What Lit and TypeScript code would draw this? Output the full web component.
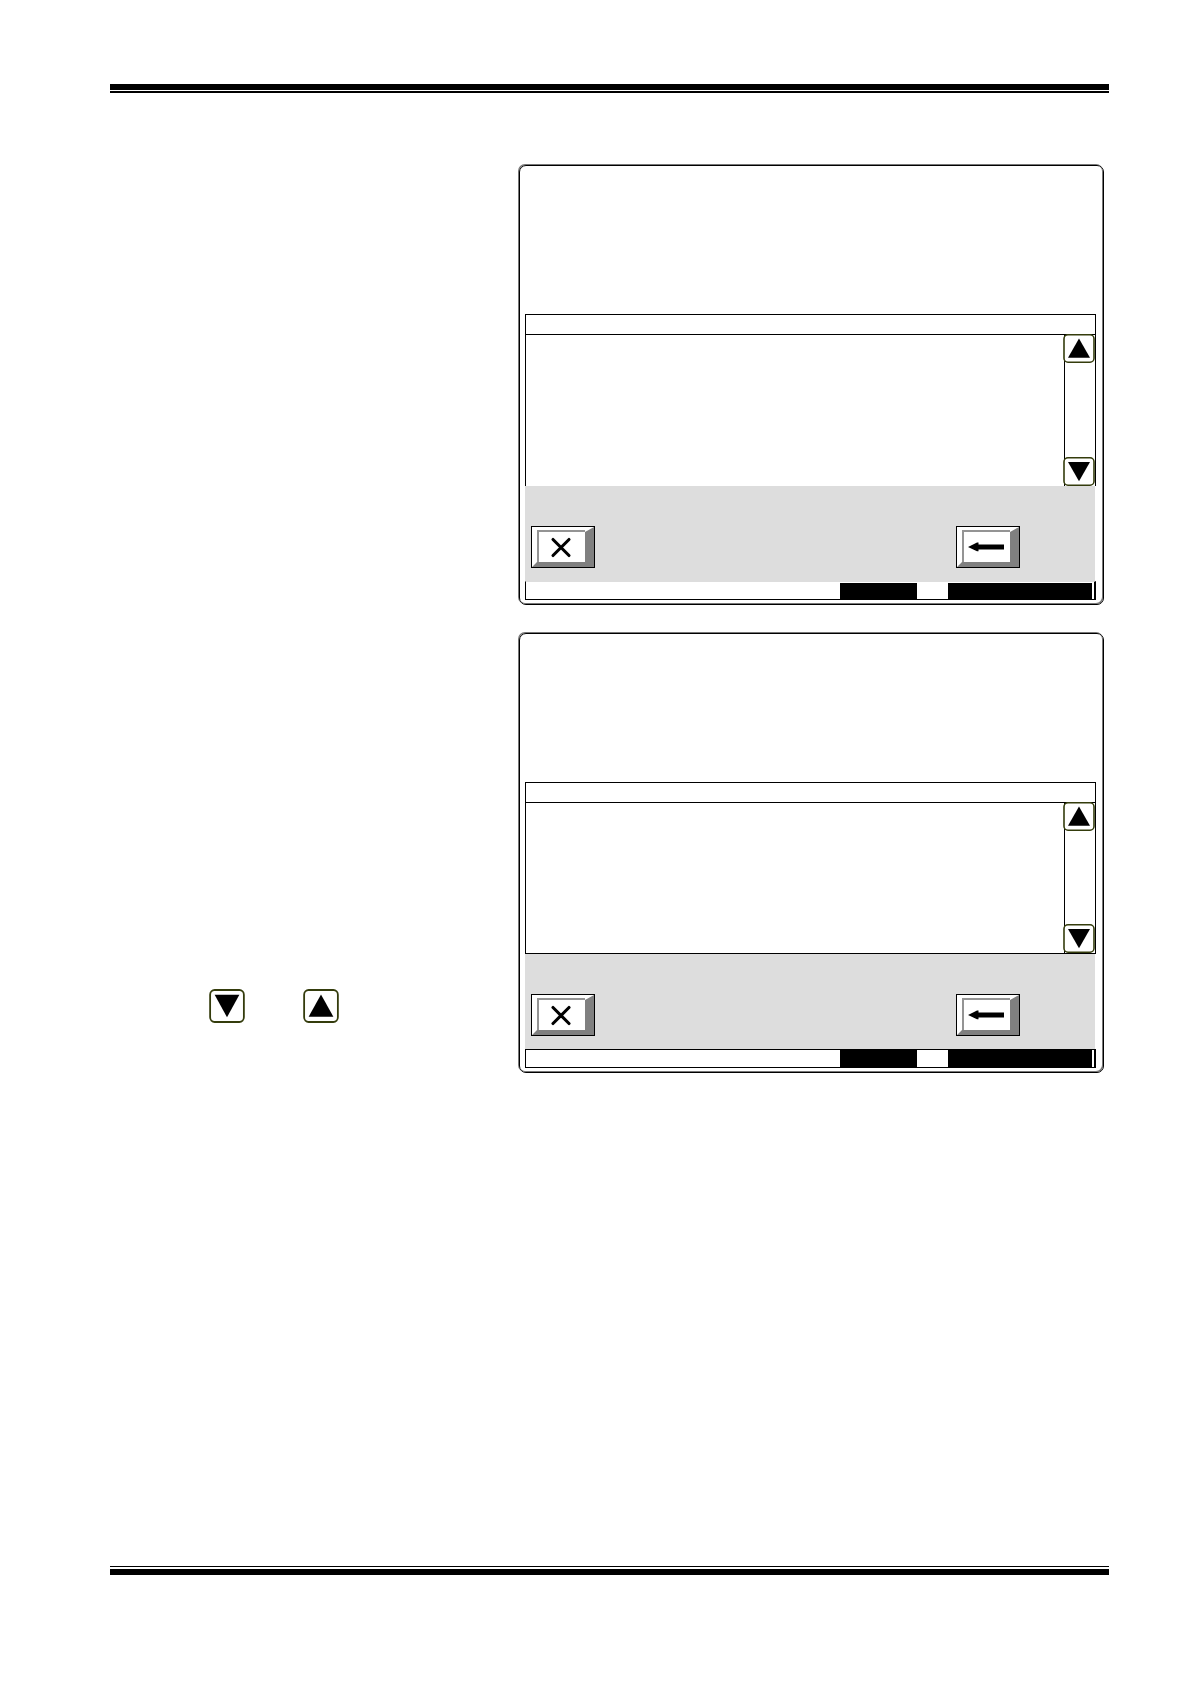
import { LitElement, html, css, svg } from "lit";
import { customElement, property } from "lit/decorators.js";

@customElement("arrow-button")
export class ArrowButton extends LitElement {
  @property() direction: "up" | "down" = "up";

  static styles = css`
    :host {
      display: block;
      width: 32px;
      height: 29px;
    }
    button {
      display: block;
      width: 100%;
      height: 100%;
      padding: 0;
      border: 0;
      background: transparent;
    }
    svg {
      display: block;
      width: 100%;
      height: 100%;
    }
  `;

  render() {
    const up = this.direction === "up";
    return html`
      <button type="button" aria-label=${up ? "Scroll up" : "Scroll down"}>
        <svg viewBox="0 0 32 29" preserveAspectRatio="none" aria-hidden="true">
          <rect x="1" y="0.8" width="30" height="27.4" rx="4" fill="#fff" stroke="#343c0c" stroke-width="1.6" />
          ${up
            ? svg`<path d="M16 4.6 27 23.7H5Z" fill="#000" />`
            : svg`<path d="M5 5H27L16 24.2Z" fill="#000" />`}
        </svg>
      </button>
    `;
  }
}

@customElement("bevel-button")
export class BevelButton extends LitElement {
  @property() icon: "cancel" | "enter" = "cancel";

  static styles = css`
    :host {
      display: block;
    }
    button {
      display: block;
      width: 64px;
      height: 42px;
      padding: 0;
      border: 0;
      background: #fff;
    }
    svg {
      display: block;
    }
  `;

  render() {
    return html`
      <button type="button" aria-label=${this.icon === "cancel" ? "Cancel" : "Enter"}>
        <svg width="64" height="42" viewBox="0 0 64 42" aria-hidden="true">
          <path d="M0 0H64V42H0Z" fill="#000" />
          <path d="M1 1H63V41H1Z" fill="#fff" />
          <path d="M63 1V41H1L6 36H54V6Z" fill="#808080" />
          <path d="M6 4H54V36H6Z" fill="#949494" />
          <path d="M8 6H54V36H8Z" fill="#fff" />
          ${this.icon === "cancel"
            ? svg`<path d="M22 13.5 38 29.5M38 13.5 22 29.5" stroke="#000" stroke-width="3.1" stroke-linecap="round" />`
            : svg`<path d="M12 21 21 16.6H22.5V18.5H48V23.4H22.5V25.2H21Z" fill="#000" />`}
        </svg>
      </button>
    `;
  }
}

@customElement("display-panel")
export class DisplayPanel extends LitElement {
  @property({ type: Boolean }) ruled = false;

  static styles = css`
    :host {
      display: block;
      box-sizing: border-box;
      padding: 148px 7px 4px 5px;
      border: 1px solid #000;
      border-radius: 7px;
      box-shadow: -1px -1px 0 #777, inset -1px -1px 0 #777;
    }
    .heading {
      height: 19px;
      border: 1px solid #000;
    }
    .list {
      display: flex;
      height: 151px;
      border: solid #000;
      border-width: 0 1px;
    }
    .rows {
      flex: 1;
    }
    .scroll {
      display: flex;
      flex-direction: column;
      justify-content: space-between;
      width: 30px;
      border-left: 1px solid #000;
    }
    .scroll arrow-button {
      margin: -1px -1px 0 -2px;
    }
    .actions {
      display: flex;
      justify-content: space-between;
      height: 95px;
      box-sizing: border-box;
      margin-right: 1px;
      padding: 40px 75px 0 6px;
      background: #ddd;
    }
    .status {
      display: flex;
      justify-content: flex-end;
      gap: 31px;
      box-sizing: border-box;
      height: 19px;
      padding: 1px 2px 0 0;
      border: solid #000;
      border-width: 1px 2px 1px 1px;
      border-top-color: #ddd;
    }
    .ruled .status {
      padding-top: 0;
      border-top-color: #000;
    }
    .ruled .list {
      height: 150px;
      border-bottom-width: 1px;
    }
    .short,
    .long {
      background: #000;
    }
    .short {
      width: 77px;
    }
    .long {
      width: 144px;
    }
  `;

  render() {
    return html`
      <div class=${this.ruled ? "ruled" : "plain"}>
        <div class="heading"></div>
        <div class="list">
          <div class="rows"></div>
          <div class="scroll">
            <arrow-button direction="up"></arrow-button>
            <arrow-button direction="down"></arrow-button>
          </div>
        </div>
        <div class="actions">
          <bevel-button icon="cancel"></bevel-button>
          <bevel-button icon="enter"></bevel-button>
        </div>
        <div class="status">
          <div class="short"></div>
          <div class="long"></div>
        </div>
      </div>
    `;
  }
}

@customElement("app-root")
export class AppRoot extends LitElement {
  static styles = css`
    :host {
      display: flex;
      flex-direction: column;
      box-sizing: border-box;
      min-height: 100vh;
      padding: 84px 82px 109px 110px;
      background: #fff;
      font-family: "Liberation Sans", sans-serif;
    }
    .rule {
      box-sizing: border-box;
      height: 9px;
      border: solid #000;
      border-width: 6px 0 2px;
    }
    .rule.foot {
      border-width: 1px 0 6px;
    }
    main {
      flex: 1;
      display: grid;
      grid-template-columns: 409fr 585fr;
      align-content: start;
      row-gap: 28px;
      padding: 72px 5px 0 0;
    }
    display-panel {
      grid-column: 2;
    }
    .keys {
      grid-column: 1;
      grid-row: 2;
      display: flex;
      align-items: flex-start;
      gap: 58px;
      padding: 356px 0 0 99px;
    }
    .keys arrow-button {
      width: 36px;
      height: 34px;
    }
  `;

  render() {
    return html`
      <div class="rule"></div>
      <main>
        <display-panel></display-panel>
        <div class="keys">
          <arrow-button direction="down"></arrow-button>
          <arrow-button direction="up"></arrow-button>
        </div>
        <display-panel ruled></display-panel>
      </main>
      <div class="rule foot"></div>
    `;
  }
}
